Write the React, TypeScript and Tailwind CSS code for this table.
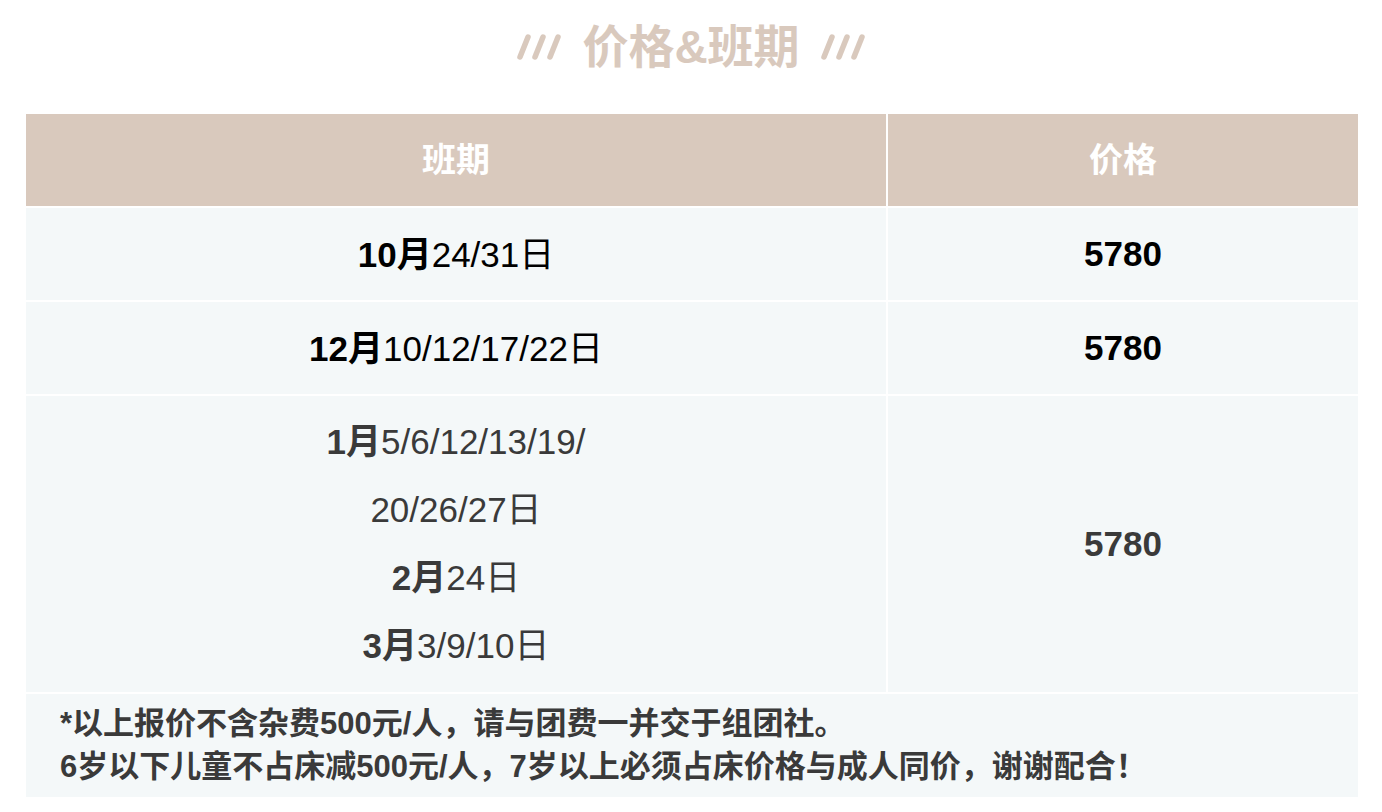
import React from 'react';

const font = "font-['Liberation_Sans','Noto_Sans_CJK_SC',sans-serif]";

const Slashes: React.FC = () => (
  <svg width="46" height="28" viewBox="0 0 46 28" className="shrink-0">
    {[0, 15, 30].map((x) => (
      <line key={x} x1={x + 4} y1={24} x2={x + 12} y2={4} stroke="#d9c9bd" strokeWidth={5.5} strokeLinecap="round" />
    ))}
  </svg>
);

const rows = [
  { lines: [{ m: '10月', d: '24/31日' }], price: '5780', color: 'text-black' },
  { lines: [{ m: '12月', d: '10/12/17/22日' }], price: '5780', color: 'text-black' },
  {
    lines: [
      { m: '1月', d: '5/6/12/13/19/' },
      { m: '', d: '20/26/27日' },
      { m: '2月', d: '24日' },
      { m: '3月', d: '3/9/10日' },
    ],
    price: '5780',
    color: 'text-[#3a3a3a]',
  },
];

const App: React.FC = () => {
  return (
    <div className={`w-[1382px] h-[812px] bg-white ${font}`}>
      <div className="flex items-center justify-center gap-[20px] h-[96px] pb-[2px]">
        <Slashes />
        <h1 className="text-[46px] font-bold text-[#d9c9bd] leading-none">价格&amp;班期</h1>
        <Slashes />
      </div>

      <div className="ml-[26px] mt-[18px] w-[1332px] grid grid-cols-[860px_470px] gap-[2px] bg-white">
        <div className="h-[92px] bg-[#d9c9bd] flex items-center justify-center text-white font-bold text-[34px]">班期</div>
        <div className="h-[92px] bg-[#d9c9bd] flex items-center justify-center text-white font-bold text-[34px]">价格</div>

        {rows.map((r, i) => (
          <React.Fragment key={i}>
            <div
              className={`bg-[#f4f8f9] flex flex-col items-center justify-center ${r.color} text-[35px] ${
                r.lines.length > 1 ? 'py-[12px]' : 'h-[92px]'
              }`}
            >
              {r.lines.map((l, j) => (
                <div key={j} className={r.lines.length > 1 ? 'leading-[68px]' : 'leading-none'}>
                  {l.m && <span className="font-bold">{l.m}</span>}
                  {l.d}
                </div>
              ))}
            </div>
            <div className={`bg-[#f4f8f9] flex items-center justify-center font-bold text-[35px] ${r.color}`}>
              {r.price}
            </div>
          </React.Fragment>
        ))}

        <div className="col-span-2 bg-[#f4f8f9] h-[103px] pl-[34px] pt-[8px] font-bold text-[31px] text-[#3a3a3a] leading-[43px]">
          <div>*以上报价不含杂费500元/人，请与团费一并交于组团社。</div>
          <div>6岁以下儿童不占床减500元/人，7岁以上必须占床价格与成人同价，谢谢配合！</div>
        </div>
      </div>
    </div>
  );
};

export default App;
